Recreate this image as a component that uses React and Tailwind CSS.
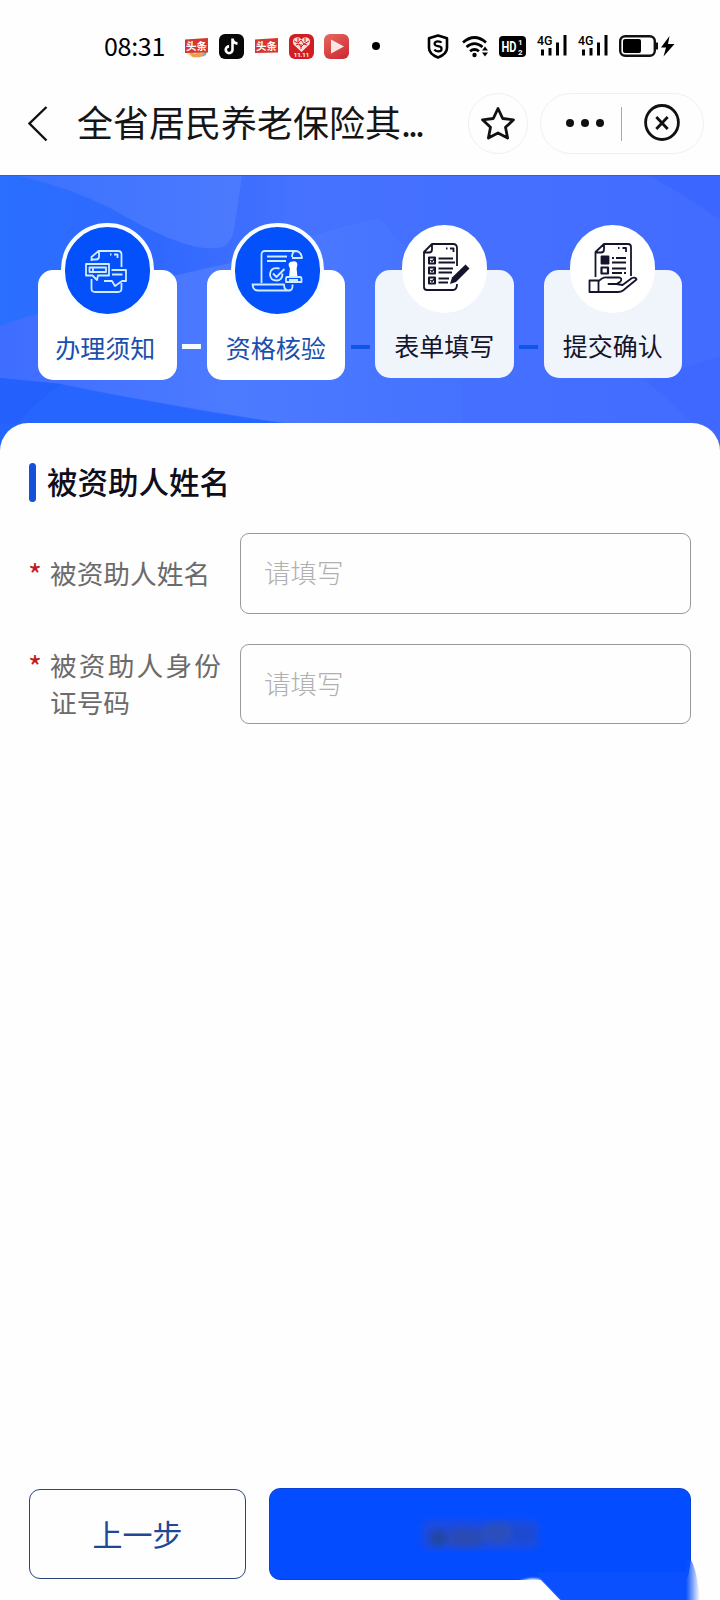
import React, { useState } from 'react';

const ToutiaoIcon = ({ festive }) => (
  <svg width="25" height="25" viewBox="0 0 25 25">
    {festive && <path d="M2 16h22l-1 3q-4 5-10.500 5T2 19z" fill="#fbe3c0" />}
    {festive && <path d="M5 19.500l3-1 3 1.500 3-1.500 3 1 4-1.500-1 3.500-4 1.500H9z" fill="#e8a04c" />}
    {festive && <path d="M20 19l3-2-1 4-4 2z" fill="#67b3d6" />}
    <path d="M1 5.500L24 4v14.500L1 19z" fill="#d63630" />
    <text x="12.500" y="16" textAnchor="middle" fontSize="10.500" fontWeight="700" fill="#fff">头条</text>
  </svg>
);

const TiktokIcon = () => (
  <svg width="25" height="25" viewBox="0 0 25 25">
    <rect width="25" height="25" rx="6" fill="#080808" />
    <path d="M13.500 4.500v11.300a3.400 3.400 0 1 1-3.400-3.400M13.500 5q.6 4 5 4.600" fill="none" stroke="#fff" strokeWidth="2.600" />
  </svg>
);

const HeartAppIcon = () => (
  <svg className="font-['Roboto',sans-serif]" width="25" height="25" viewBox="0 0 25 25">
    <rect width="25" height="25" rx="6" fill="#cf1f22" />
    <path d="M12.500 18L4.500 10.500Q2.500 5 7 3.500q3.500-.8 5.500 2 2-2.800 5.500-2 4.500 1.500 2.500 7z" fill="#f9dcd8" />
    <path d="M5 7l4 2 3-3 3 4 5-3M7 11l3-1 2 3 3-3 3 1M9 4v4m7-4v4m-4 2v5" fill="none" stroke="#cf1f22" strokeWidth="1" />
    <text x="12.500" y="23.200" textAnchor="middle" fontSize="6" fontWeight="700" fill="#fff">11.11</text>
  </svg>
);

const PlayAppIcon = () => (
  <svg width="25" height="25" viewBox="0 0 25 25">
    <defs>
      <linearGradient id="play" x1="0" y1="0" x2="0.600" y2="1">
        <stop offset="0" stopColor="#e8685f" />
        <stop offset="1" stopColor="#cf3038" />
      </linearGradient>
    </defs>
    <rect width="25" height="25" rx="6" fill="url(#play)" />
    <path d="M7 5.500l13 7-13 7z" fill="#fbe6e2" />
  </svg>
);

const SignalIcon = () => (
  <svg className="overflow-visible font-['Roboto',sans-serif]" width="30" height="24" viewBox="0 0 30 24">
    <text x="0" y="11" fontSize="13" fontWeight="500" textLength="15.500" lengthAdjust="spacingAndGlyphs" fill="#000">4G</text>
    <path d="M5.500 15.500v6M13 14v7.500M20.500 8.500v13M28 1v20.500" stroke="#000" strokeWidth="3" />
  </svg>
);

const StatusBar = () => (
  <div className="flex h-[92px] items-center pl-[104px] text-black">
    <span className="-mt-0.5 w-[62px] whitespace-nowrap text-[25px] leading-none tracking-[-0.3px]">08:31</span>
    <div className="ml-[18px] flex items-center gap-[10px]">
      <ToutiaoIcon festive />
      <TiktokIcon />
      <ToutiaoIcon />
      <HeartAppIcon />
      <PlayAppIcon />
    </div>
    <div className="ml-[23px] h-2 w-2 rounded-full bg-black" />

    <svg className="ml-[47px]" width="22" height="25" viewBox="0 0 22 25">
      <path d="M11 1.500l9 2.800v9.700q0 6-9 9.500-9-3.500-9-9.500V4.300z" fill="none" stroke="#000" strokeWidth="2.600" strokeLinejoin="round" />
      <path d="M14.500 8.700q-1-1.400-3.500-1.400-3.400 0-3.400 2.400 0 2 3.400 2.500 3.600.5 3.600 2.700 0 2.400-3.600 2.400-2.500 0-3.700-1.600" fill="none" stroke="#000" strokeWidth="2.200" />
    </svg>
    <svg className="ml-[13px]" width="27" height="23" viewBox="0 0 27 23">
      <g fill="none" stroke="#000" strokeWidth="2.700">
        <path d="M1 7.500Q12.500-2.500 24 7.500" />
        <path d="M4.500 12q8-6.800 16 0" />
        <path d="M8 16.300q4.500-3.600 9 0" />
      </g>
      <circle cx="12.500" cy="20" r="2.200" />
      <path d="M20 15.500l3-4 3 4zM20 17.500l3 4 3-4z" />
    </svg>
    <svg className="ml-[10px] font-['Roboto',sans-serif]" width="27" height="21" viewBox="0 0 27 21">
      <rect width="27" height="21" rx="4" />
      <text x="2.500" y="15.500" fontSize="14" fontWeight="700" textLength="15" lengthAdjust="spacingAndGlyphs" fill="#fff">HD</text>
      <text x="19" y="9.400" fontSize="8" fontWeight="700" fill="#fff">1</text>
      <text x="19" y="18.800" fontSize="8" fontWeight="700" fill="#fff">2</text>
    </svg>
    <div className="ml-[11px] flex gap-[11px]">
      <SignalIcon />
      <SignalIcon />
    </div>
    <svg className="ml-[11px]" width="56" height="22" viewBox="0 0 56 22">
      <rect x="1.200" y="1.200" width="34.600" height="19.600" rx="5" fill="none" stroke="#111" strokeWidth="2.400" />
      <rect x="4" y="4" width="18" height="14" rx="2" />
      <path d="M38 7.500v7" stroke="#111" strokeWidth="2" />
      <path d="M50.500 1L42 12.500h5L44.500 21.500 55.500 9H49z" />
    </svg>
  </div>
);

const TitleBar = () => (
  <div className="flex h-[83px] items-start pl-7">
    <svg className="mt-[14px]" width="20" height="36" viewBox="0 0 20 36">
      <path d="M18.500 1L1.500 17.500l17 17" fill="none" stroke="#111" strokeWidth="2.400" />
    </svg>
    <h1 className="ml-[29px] mt-[5px] w-[391px] whitespace-nowrap text-[36px] leading-[48px] text-[#151515]">
      全省居民养老保险其<span className="tracking-[-3px]">...</span>
    </h1>
    <button className="mt-px flex h-[61px] w-[60px] items-center justify-center rounded-full border border-[#f0f0f0]">
      <svg width="36" height="36" viewBox="0 0 36 36">
        <path d="M18 2.500l4.700 10 10.800 1.300-8 7.500 2.100 10.800L18 27l-9.600 5.100 2.100-10.800-8-7.500 10.800-1.300z" fill="none" stroke="#111" strokeWidth="2.800" strokeLinejoin="round" />
      </svg>
    </button>
    <div className="ml-3 mt-px flex h-[61px] w-[164px] items-center rounded-full border border-[#f0f0f0] pl-[25px]">
      <div className="-mt-0.5 flex gap-[7px]">
        <i className="size-2 rounded-full bg-[#111]" />
        <i className="size-2 rounded-full bg-[#111]" />
        <i className="size-2 rounded-full bg-[#111]" />
      </div>
      <div className="ml-[17px] h-[34px] w-px bg-[#aaa]" />
      <svg className="-mt-0.5 ml-[22px]" width="36" height="38" viewBox="0 0 36 38">
        <ellipse cx="18" cy="18.500" rx="16.400" ry="17" fill="none" stroke="#111" strokeWidth="2.800" />
        <path d="M12.300 13l11.400 12M23.700 13L12.300 25" stroke="#111" strokeWidth="2.800" />
      </svg>
    </div>
  </div>
);

const NoticeIcon = () => (
  <svg className="-ml-0.5" width="44" height="44" viewBox="0 0 44 44" fill="none" stroke="#d0ecff" strokeWidth="1.800" strokeLinejoin="round">
    <path d="M7.500 12V8l7-6H34q3.500 0 3.500 3.500V18M7.500 10.500H12q3 0 3-3V2M26 5.500h1.500M30 5.500h3.500V9" />
    <path d="M7.500 30v9.500q0 3.500 3.500 3.500h23q3.500 0 3.500-3.500V34" />
    <path d="M2 15h23v11.500H14l-1 4.500-4.500-4.500H2z" />
    <path d="M5.500 18.500H22V23H5.500zM9 18.500V23" />
    <path d="M27.500 21H42v11h-4L31 37l-3-5h-8M28 25.500h10.500" />
  </svg>
);

const VerifyIcon = () => (
  <svg className="-ml-0.5" width="52" height="44" viewBox="0 0 52 44" fill="none" stroke="#d0ecff" strokeWidth="1.800" strokeLinejoin="round">
    <path d="M10.500 34V5.500Q10.500 2 14 2h30q-3 1-3 6M44 2q6 0 7 7H41" />
    <path d="M16 7.500h20M16 12h19" />
    <path d="M1.500 35.500H33q0 6 5 6H7q-5 0-5.500-6z" />
    <path d="M38 41.500q4 0 3.500-6" />
    <path d="M28.500 19.500q-9-2-9.500 6 .5 6 6.500 6t6-7M22 24.500l3.500 3.500 8-8" />
    <path d="M41 13.500q4-1.500 4.500 2l-.8 4 .8 8h-6.500l.8-8-1.300-3.500q0-2 2.500-2.500z" fill="#fff" stroke="#fff" />
    <path d="M36 28h13q1.500 0 1.500 2v3H35v-3q0-2 1-2zM38 31h9" />
  </svg>
);

const FormIcon = () => (
  <svg className="-mt-1 ml-1" width="48" height="50" viewBox="0 0 48 50" fill="none" stroke="#14142c" strokeWidth="1.800" strokeLinejoin="round">
    <path d="M35 24V6q0-4-4-4H10L2 10v35q0 3 3 3h26q4 0 4-6M2 10.500h5q3 0 3-3V2M24 6.500h1.500M28 6.500h3.500V10" />
    <path d="M7 15.500h6v6H7zM7 25.500h6v6H7zM7 35.500h6v6H7z" strokeWidth="2" />
    <path d="M8.500 18l1.500 1.500 2.500-3M8.500 28l1.500 1.500 2.500-3M8.500 38l1.500 1.500 2.500-3" strokeWidth="1.300" />
    <path d="M16.500 16.500H31M16.500 20.500H33M16.500 26.500H31M16.500 30.500H30M16.500 36.500H27M16.500 40.500H26" />
    <path d="M43.500 22.500l4 4L34 40l-6 2 2-6.500z" fill="#14142c" stroke="none" />
  </svg>
);

const SubmitIcon = () => (
  <svg className="-mt-1" width="50" height="52" viewBox="0 0 50 52" fill="none" stroke="#14142c" strokeWidth="1.800" strokeLinejoin="round">
    <path d="M7.500 36V11L16 3h24q3 0 3 3v29M7.500 11.500H13q3 0 3-3V3M30 7h1.500M34.500 7H38v4" />
    <path d="M13.500 15.500h7v7h-7z" fill="#14142c" />
    <path d="M13.500 26.500h6.500v6h-6.500z" strokeWidth="2.200" />
    <path d="M24 17h2M28 17h10M24 21.500h14M24 27.500h14M24 32h10M36 32h2" />
    <path d="M1.500 39.500h9V51h-9zM10.500 40.500q4-5 9-4h12q3 1 1 4l-4 2.500h-8 8l6 1L44 37q4-1 4.500 1.500L35 49.500q-2 1.500-5 1.500H10.500" fill="#fff" />
  </svg>
);

const BannerBackdrop = () => (
  <svg className="absolute inset-0" width="720" height="280" viewBox="0 0 720 280" preserveAspectRatio="none">
    <defs>
      <linearGradient id="base" x1="0" y1="0" x2="1" y2="0">
        <stop offset="0" stopColor="#2a6fff" />
        <stop offset="0.220" stopColor="#3068fe" />
        <stop offset="0.420" stopColor="#4672ff" />
        <stop offset="1" stopColor="#426cff" />
      </linearGradient>
      <linearGradient id="swoosh" x1="0" y1="0" x2="1" y2="0">
        <stop offset="0" stopColor="#3f6dff" />
        <stop offset="0.500" stopColor="#4c7bff" />
        <stop offset="1" stopColor="#4572ff" />
      </linearGradient>
      <linearGradient id="petal" x1="0" y1="0" x2="1" y2="0">
        <stop offset="0" stopColor="#3b72ff" />
        <stop offset="1" stopColor="#4c7afe" />
      </linearGradient>
    </defs>
    <rect width="720" height="280" fill="url(#base)" />
    <path d="M20 0Q70 12 110 32Q185 76 216 72Q230 72 234 54L242 0z" fill="url(#petal)" />
    <path d="M0 150Q110 112 240 85Q330 52 380 42L460 140 462 248H290Q160 228 60 208L0 202z" fill="url(#swoosh)" />
    <path d="M0 202L60 208Q170 232 290 248H0z" fill="#2765ff" />
    <path d="M62 208Q35 225 12 255L0 280V202z" fill="#1f5cfa" opacity=".5" />
    <path d="M650 0Q690 22 720 44V0z" fill="#3b66ff" />
    <path d="M645 205Q690 240 720 280V180z" fill="#3d67ff" opacity=".7" />
  </svg>
);

const steps = [
  { id: 'notice', name: '办理须知', icon: <NoticeIcon />, done: true, offset: '', textOffset: '-ml-1' },
  { id: 'verify', name: '资格核验', icon: <VerifyIcon />, done: true, offset: 'ml-1', textOffset: '' },
  { id: 'form', name: '表单填写', icon: <FormIcon />, done: false, offset: '', textOffset: '' },
  { id: 'submit', name: '提交确认', icon: <SubmitIcon />, done: false, offset: '', textOffset: '' }
];

const StepCard = ({ step }) => (
  <div
    className={`flex w-[138.5px] flex-col items-center rounded-[15px] ${
      step.done ? 'h-[110px] bg-white text-[#1b4fae]' : 'h-[108px] bg-[#f0f4fb] text-[#14142c]'
    }`}
  >
    <div
      className={`flex shrink-0 items-center justify-center rounded-full ${step.offset} ${
        step.done ? '-mt-[47px] h-[95px] w-[93px] border-4 border-[#f8fdff] bg-[#0450fb]' : '-mt-[45px] mb-[1px] h-[88px] w-[85px] bg-white'
      }`}
    >
      {step.icon}
    </div>
    <span className={`whitespace-nowrap text-[25px] leading-9 ${step.done ? 'mt-[11px]' : 'mt-[13px]'} ${step.textOffset}`}>{step.name}</span>
  </div>
);

const Field = ({ label, value, onChange, className }) => (
  <div className={`flex items-center ${className}`}>
    <div className="-mt-0.5 flex w-[211px] text-[26.7px] leading-[37px] text-[#6b6b6b]">
      <span className="-ml-px w-[22px] pt-[3px] text-[30px] leading-[34px] text-[#c4191f]">*</span>
      <label className="w-[171px] text-justify">{label}</label>
    </div>
    <input
      className="h-full w-[451px] rounded-[9px] border border-[#999] bg-[#fefefe] pb-1 pl-[23px] text-[26.5px] font-light text-[#333] outline-none placeholder:text-[#b0b0b0]"
      placeholder="请填写"
      value={value}
      onChange={onChange}
    />
  </div>
);

const App = () => {
  const [form, setForm] = useState({ name: '', idNo: '' });

  return (
    <div className="flex h-[1600px] w-[720px] flex-col overflow-hidden bg-[#fefefe] font-['Noto_Sans_CJK_SC',sans-serif]">
      <StatusBar />
      <TitleBar />

      {/* 步驟進度 */}
      <section className="relative h-[276px] shrink-0 border-t border-[#3f5fb5]">
        <BannerBackdrop />
        <div className="relative flex items-start pl-[38px] pt-[94px]">
          {steps.map((s, idx) => (
            <React.Fragment key={s.id}>
              {idx > 0 && (
                <div className="flex w-[30px] justify-center pt-[74px]">
                  <div className={idx === 1 ? 'h-[5px] w-[19px] bg-[#f4fbff]' : 'mt-px h-1 w-[19px] bg-[#0f55e6]'} />
                </div>
              )}
              <StepCard step={s} />
            </React.Fragment>
          ))}
        </div>
      </section>

      {/* 表單內容 */}
      <main className="relative -mt-7 flex-1 rounded-t-[28px] bg-[#fefefe] px-[29px] pt-10">
        <div className="flex items-center">
          <div className="h-[39px] w-[7px] rounded-full bg-[#1450d8]" />
          <h2 className="-mt-0.5 ml-[11px] text-[30.5px] font-medium leading-[39px] text-[#0e0e1c]">被资助人姓名</h2>
        </div>
        <Field
          className="mt-[31px] h-[81px]"
          label="被资助人姓名"
          value={form.name}
          onChange={e => setForm({ ...form, name: e.target.value })}
        />
        <Field
          className="mt-[30px] h-[80px]"
          label="被资助人身份证号码"
          value={form.idNo}
          onChange={e => setForm({ ...form, idNo: e.target.value })}
        />
      </main>

      <footer className="relative flex h-[112px] shrink-0 items-start gap-[23px] pl-[29px]">
        <button className="mt-px h-[90px] w-[217px] rounded-[11px] border border-[#2a4580] pb-0.5 text-[30px] text-[#1f4796]">上一步</button>
        <button className="flex h-[92px] w-[422px] items-center justify-center rounded-[11px] border border-[#0a43d4] bg-[#044cff]">
          <svg width="128" height="42" viewBox="0 0 128 42">
            <defs>
              <filter id="smudge">
                <feGaussianBlur stdDeviation="3.500" />
              </filter>
            </defs>
            <g filter="url(#smudge)">
              <rect x="6" y="7" width="116" height="29" rx="6" fill="#1a4ce0" />
              <ellipse cx="22" cy="25" rx="9" ry="9" fill="#2347a0" />
              <ellipse cx="50" cy="25" rx="20" ry="10" fill="#2a4cb4" />
              <ellipse cx="82" cy="20" rx="16" ry="11" fill="#2c50bc" />
              <ellipse cx="108" cy="21" rx="13" ry="9" fill="#1c4cd0" />
            </g>
          </svg>
        </button>
        <svg className="absolute right-0 bottom-0" width="210" height="52" viewBox="0 0 210 52">
          <defs>
            <linearGradient id="edge" gradientUnits="userSpaceOnUse" x1="176" y1="0" x2="190" y2="0">
              <stop offset="0" stopColor="#0a50ff" />
              <stop offset="1" stopColor="#0a50ff" stopOpacity="0" />
            </linearGradient>
            <filter id="soft">
              <feGaussianBlur stdDeviation="0.800" />
            </filter>
          </defs>
          <path d="M50 52L29 30V24H176V52z" fill="#0a50ff" />
          <path d="M181 12h2V52h-7V40z" fill="#fefefe" />
          <path d="M176 12H181Q187 22 190 52H176z" fill="url(#edge)" />
          <path d="M8 34Q19 29 29 31L53 56H6z" fill="#fefefe" filter="url(#soft)" />
        </svg>
      </footer>
    </div>
  );
};

export default App;
